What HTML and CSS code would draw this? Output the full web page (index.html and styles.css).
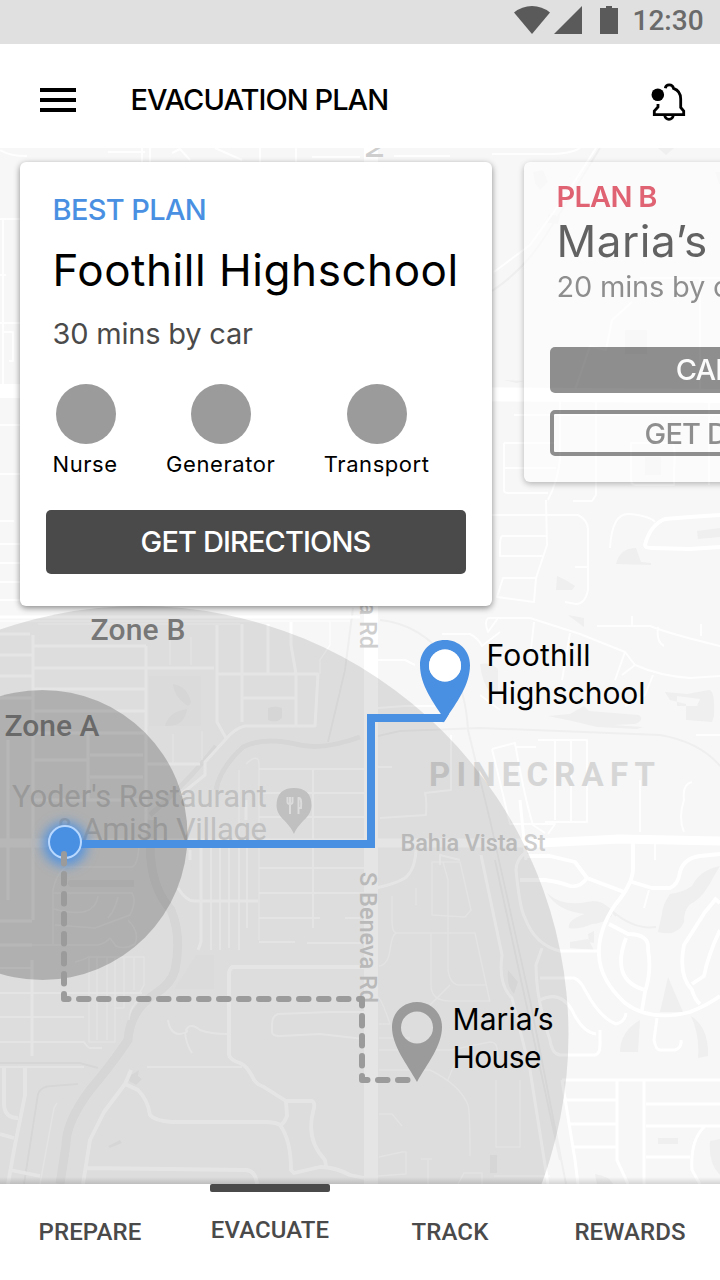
FILE: index.html
```html
<!DOCTYPE html>
<html lang="en">
<head>
<meta charset="utf-8">
<title>Evacuation Plan</title>
<link rel="stylesheet" href="styles.css">
</head>
<body>
<div class="app">
  <div class="status">
    <svg class="status-icons" width="106" height="44" viewBox="514 0 106 44">
      <path d="M514 12.5Q522 6 532 6T550 12.5L532 34Z"/>
      <path d="M554 34L582 6V34Z"/>
      <path d="M600 8h6V6h6v2h6v26h-18Z"/>
    </svg>
    <span class="clock">12:30</span>
  </div>
  <header class="header">
    <div class="menu"><i></i><i></i><i></i></div>
    <h1 class="title">EVACUATION PLAN</h1>
    <svg class="bell" width="36" height="40" viewBox="650 82 36 40">
      <circle cx="657.8" cy="94.8" r="6.3"/>
      <path class="bell-line" d="M665.3 88.300C666 83.600 672.500 84 673.500 88.300C678.500 90 680.700 94.500 680.700 99V107.500L683.700 111V114.600H654.300V111L658 107V104"/>
      <path class="bell-line" d="M664.500 115C666 120.800 672 120.800 673.500 115"/>
    </svg>
  </header>
  <main class="map">
    <svg class="map-canvas" width="720" height="1036" viewBox="0 148 720 1036">
      <defs>
        <filter id="glow" x="-100%" y="-100%" width="300%" height="300%"><feGaussianBlur stdDeviation="6"/></filter>
      </defs>
      <g class="block">
        <path d="M149 676h52v50h-52z"/><path d="M196 955h18v34h-40z"/>
      </g>
      <g class="water">
        <path d="M173 684q14 2 18 18q-2 6-6 2q-11-8-12-20zM165 726q3-14 22-17q-2 18-22 17zM268 708q8-3 14 0v10q-6 6-14 2z"/>
        <path d="M548 716l22-2 14-8 5 5 50 4q6 5-4 9l-22 1 30 2-6 2-40-2-25-6zM665 692l22 2 22-4q6 0 5 26l-2 6-26-2v-16l-16-4zm12 4v10h20l3-7z"/>
        <path d="M568 615l16 3v9zM616 564q4-16 20-16l5 14 10 1v2zM557 576q6 2 18 10l-3 4h-16zM697 531l23-3v9l-22 2z"/>
        <path d="M480 664q10-2 18 5v25l-8-2q-8-10-10-28zM547 893q15 14 40 9 20-4 25 14-10 8-20 8-14 6-23 4-2-8 16-14-28-3-38-21zM570 942l18-3 6 11-24-2zM588 934l6-3v12l-5-1z"/>
        <path d="M720 866q-20 4-28 20-8 6-22 8-8 12-8 20l-4 18q20 5 26-10 0-16 10-20 10-6 20-26zM660 1012l8-35 15 35zM620 1052q0-20 20-32l-2 32zM691 1016q18 12 17 40l-10 2q2-22-7-42zM658 1138h20v6h-20zM710 1141l10-2v36q-12-12-10-34zM595 1174q14 2 18 10h-16z"/>
        <path d="M508 970l10 12-4 12q-8-8-6-24zM490 1155h7v18h-7zM70 880h64v7H70q-5-4 0-7zM108 1146l12-6 2 3-12 5zM131 1075l8-5-1 6 4 3-6 6-7-4z"/>
        <path d="M658 148h16l-8 7zM533 172l10-2 5 12-8 8-5-7zM548 214l12 2-2 8-10-1zM625 330h22v24h-22zM645 457h16v18h-16zM715 172h5v14zM504 380l20 1-7 2z"/>
      </g>
      <g class="river">
        <path class="w10" d="M152 820Q144 880 171 910Q182 936 175 970Q171 984 155 994Q130 1010 128 1040Q112 1064 90 1090Q66 1122 66 1145L60 1184"/>
        <path class="w6" d="M360 737Q325 750 300 745Q265 736 243 747Q220 768 216 790M216 746Q190 780 150 815"/>
        <path class="w3" d="M612 911Q634 930 656 927M592 902q18 4 24 14M378 736L400 731L480 728L660 735Q700 742 720 766M353 608L345 670L328 742M380 620Q420 624 448 660Q466 690 468 730L490 820L530 1000L566 1184M495 860L560 1160M0 1063h80l18 5M24 1184l14-90q3-8 14-8l26-2M492 291q30-20 50-50T600 148"/>
      </g>
      <g class="road">
        <path class="w14" d="M371 148V1184M0 391L720 396"/>
        <path class="w8" d="M0 843H540L620 839L720 841"/>
        <path class="w4" d="M33 635V920M0 634H30M0 655H33M0 676H33M0 698H33M34 646H146M34 668H214M34 689H146M34 711H146M34 733H146M34 760H88M90 755H143M90 777H143M34 800H146M146 646V830M88 733V800M8 740V900M32 960V1056M0 921H32M0 945H32M0 617H360"/>
        <path class="w4" d="M217 625V722L226 738M217 674H318L315 726H245Q235 728 225 740L205 762V775L180 795M242 624V722M242 698H295M268 624V673M291 622V645L296 674V725M146 764H200M246 820V800"/>
        <path class="w2" d="M38 624H240M0 621H350M170 637V665M191 637V665M173 734V764M202 731V760M330 622V645L320 660V674M246 764Q259 752 259 765V940M239 770V840"/>
        <path class="w3" d="M259 769H364M259 793H364M259 817H364M259 868H364M259 893H364M259 918H320M313 769V928M259 942H295M307 943H364M345 918H360"/>
        <path class="w4" d="M201 848V942L198 950M178 888Q186 901 194 901H258M190 860V850"/>
        <path class="w3" d="M211 848V950M220 848V950M229 848V948M239 848V950M247 848V928"/>
        <path class="w2" d="M53 946V890Q56 874 66 867H132Q139 864 139 840M54 893H132Q137 900 130 915L95 928L55 925M54 909Q95 920 98 896M118 897Q115 910 108 918M128 920Q140 932 135 944Q125 950 116 946L110 938M0 945H97Q105 944 110 938M75 962Q84 960 88 957H144V985L140 992M89 957V1042H115V957M97 957V1040M107 957V1040M124 957V1008H115M134 957V990M129 1020Q130 1005 140 1000"/>
        <path class="w3" d="M0 968H32V1056M0 993H142M0 1017H84M0 1042H84Q88 1048 90 1048H102M0 1067H84M147 1067H242M168 1020Q170 1034 180 1034Q190 1032 186 1030Q190 1022 200 1030Q210 1034 228 1034M185 1032Q186 1044 192 1053M364 1012L330 1012L278 1014Q272 1016 272 1024V1032Q272 1036 280 1036L320 1034L364 1039"/>
        <path class="w5" d="M364 967H232Q229 970 229 974V1055Q230 1060 240 1063Q246 1065 252 1076Q255 1084 264 1087L286 1101H312Q316 1103 313 1112Q306 1140 325 1160L326 1166M286 1101L287 1116Q284 1124 280 1125Q291 1140 291 1170L294 1173L320 1167Q335 1167 350 1175L364 1178M280 1125Q275 1122 265 1122H172Q155 1121 150 1115Q148 1100 138 1090L125 1084M131 1070L125 1084L104 1112L90 1140L83 1184M87 1168L246 1170Q256 1171 257 1184M4 1068V1105Q5 1118 18 1118M25 1068V1095L14 1150L8 1184M0 1134L14 1138M10 1170L40 1176"/>
        <path class="w2" d="M57 1103L54 1108L40 1184M392 896V920Q392 932 396 933H475L490 1002M379 966Q388 965 390 950Q392 935 396 933M416 888V905M431 933V985Q431 1001 450 1001H490M443 862L448 880V970Q450 985 460 985H487M432 862H460L471 910L465 917L432 915ZM450 985L430 1005M379 1038H410M379 1050H450L490 1042Q496 1042 497 1048L500 1070M379 1070H430Q460 1085 468 1105Q470 1112 470 1156M496 1080V1147H520V1080M379 1114H392L402 1126M379 1157L402 1152H406V1174L378 1176M421 1159H432M428 1160V1184M458 1184L464 1173H482V1184M494 1176H550M379 1024H390Q382 1000 378 997M448 1080L456 1060"/>
        <path class="w4" d="M376 888Q395 884 405 878Q415 870 416 850M481 855L502 955Q498 985 512 998L530 1070L548 1184M520 800L526 860M554 840Q516 850 516 870Q520 910 525 918Q535 945 560 951H598M542 948L536 965Q536 1000 550 1040Q552 1054 560 1055H595Q600 1054 600 1045V1030M540 978H574Q580 980 585 990Q600 1018 616 1024Q625 1022 626 1013M540 1000Q560 990 572 1010Q582 1032 596 1034"/>
        <path class="w5" d="M520 880H545Q560 882 570 886Q580 888 587 878L575 862L550 856H525M587 878L624 892M633 840V870Q632 885 615 905Q598 930 599 955Q600 980 625 1003Q650 1022 690 1012Q708 1005 720 996M632 882L652 888H670Q678 885 680 872Q684 858 700 856L720 854M609 924L628 934Q650 934 648 950Q652 970 645 992L642 1010M626 938Q610 980 645 990M715 900Q710 906 705 912L684 945Q678 975 692 990Q695 1000 700 1004M714 898L720 903M692 984L704 976Q708 955 720 930"/>
        <path class="w4" d="M657 1018L654 1040Q656 1050 660 1050H675Q682 1048 681 1040M562 1080H720M563 1100H618M568 1124H616M574 1147H616M617 1080V1160L628 1184M644 1080V1184M646 1104H720M646 1126H720M646 1157H690M562 1080L575 1160L578 1184M705 1126Q690 1140 692 1170L700 1184"/>
        <path class="w3" d="M644 908L649 890M655 860V843M498 618L488 632Q484 622 488 618H530L580 634L625 652L635 665Q660 676 690 678L720 676M442 634H470Q478 638 482 646L500 632M597 626H650Q670 634 720 646M534 622L530 658M632 626V616M570 633L562 680M625 652L615 680M635 665L622 675M378 660H405L415 665M658 627Q656 642 664 646M701 636V624M440 648L460 650M480 695L500 710M653 675L645 695L625 706"/>
        <path class="w3" d="M492 749L515 743Q525 800 533 825L545 833M515 747H536M538 740H587V822H545M555 740V820M571 740V822M492 749L510 824H555L548 834M640 780V832M692 782Q682 784 684 800Q678 818 684 832M696 735H720M378 708L405 706H440M451 735V790L425 793Q427 800 426 815L380 818M378 767H392M440 865V855L460 860"/>
        <path class="w3" d="M492 515H578Q588 520 588 530V590Q585 604 576 604L565 602M575 567H587M547 536H502Q500 538 500 545V556H543M536 578H503L497 597L534 602L536 578L547 545L546 500M504 443V490Q504 493 508 493H548M504 443H555M504 468H556M560 400V460Q558 480 548 500M596 400V495L592 501H573M610 548Q612 512 630 514Q650 516 655 522M631 443H672Q676 446 674 470V485H635Q631 484 631 480Z"/>
        <path class="w5" d="M720 515L690 517L665 519Q650 525 645 545Q645 548 652 548L690 549L720 547"/>
        <path class="w3" d="M494 272L530 245L566 195L596 148M492 154H540Q570 155 580 148M632 302L612 320L606 350L590 346L575 390M514 415H720M709 400V485M640 278H720M700 278V390M0 150Q10 156 27 156M0 219H20M3 219V385M0 323H20M0 275H6M4 332H13V361H9M0 425H20M0 474H20M0 521H14M0 544H20M0 563H20M0 582H20M0 600H20M108 152H145M142 148V162M150 148V162M172 153L180 149L190 160M215 148L242 160M260 148V162M296 148V162M312 157H360M394 156H450"/>
      </g>
      <g class="place">
        <text x="267" y="807" text-anchor="end" class="poi" textLength="255">Yoder's Restaurant</text>
        <text x="267" y="840" text-anchor="end" class="poi" textLength="211">&amp; Amish Village</text>
        <text x="429" y="786" class="district" textLength="226">PINECRAFT</text>
        <text x="400.500" y="851" class="street" textLength="145">Bahia Vista St</text>
        <text transform="translate(360 872) rotate(90)" class="street" textLength="131">S Beneva Rd</text>
        <text transform="translate(360 518) rotate(90)" class="street" textLength="131">S Beneva Rd</text>
        <text transform="translate(366 142) rotate(90)" class="street">N</text>
        <path d="M276.500 805Q277 788 294 788T311.500 805C311.500 818 300 820 294 834C288 820 276.500 818 276.500 805Z"/>
        <path class="fork" d="M287.500 797V802Q287.500 804 290 804T292.500 802V797M290 797V814M298.500 814V798Q302 797 301 808H299"/>
      </g>
      <circle class="zone-b" cx="140" cy="1034.500" r="428.500"/>
      <circle class="zone-a" cx="42.500" cy="835" r="145"/>
      <text x="90.500" y="640" class="zone-label" textLength="95">Zone B</text>
      <text x="4.500" y="736" class="zone-label" textLength="95">Zone A</text>
      <circle class="halo" cx="65" cy="844" r="22" filter="url(#glow)"/>
      <path class="route" d="M65 844H371V718H444"/>
      <path class="pin-blue" fill-rule="evenodd" d="M420 665C420 650.500 431 640 445 640S470 650.500 470 665C470 685 457 702 445 720C433 702 420 685 420 665ZM461 665.500A16 16 0 1 0 429 665.500A16 16 0 1 0 461 665.500Z"/>
      <path class="pin-blue" d="M441 714H449L444.500 721.500Q443 723 441 721Z"/>
      <circle class="pin-hole" cx="445" cy="665.500" r="16"/>
      <circle class="here" cx="65" cy="842" r="16"/>
      <path class="alt-route" d="M64 854V999H362V1080H410"/>
      <path class="pin-gray" fill-rule="evenodd" d="M392 1027C392 1012.500 403 1002 417 1002S442 1012.500 442 1027C442 1046 427 1064 417 1082C407 1064 392 1046 392 1027ZM433 1027.500A16 16 0 1 0 401 1027.500A16 16 0 1 0 433 1027.500Z"/>
      <text x="486.500" y="666" class="pin-label" textLength="104">Foothill</text>
      <text x="486.500" y="704" class="pin-label" textLength="159">Highschool</text>
      <text x="452.500" y="1030" class="pin-label" textLength="101">Maria’s</text>
      <text x="452.500" y="1068" class="pin-label" textLength="89">House</text>
    </svg>
    <div class="cards">
      <section class="card card-best">
        <div class="tag">BEST PLAN</div>
        <h2 class="place-name">Foothill Highschool</h2>
        <p class="duration">30 mins by car</p>
        <div class="resources">
          <div class="resource"><i></i><span>Nurse</span></div>
          <div class="resource"><i></i><span>Generator</span></div>
          <div class="resource"><i></i><span>Transport</span></div>
        </div>
        <button class="button">GET DIRECTIONS</button>
      </section>
      <section class="card card-alt">
        <div class="tag">PLAN B</div>
        <h2 class="place-name">Maria’s House</h2>
        <p class="duration">20 mins by car</p>
        <button class="button">CALL MARIA</button>
        <button class="button button-outline">GET DIRECTIONS</button>
      </section>
    </div>
  </main>
  <nav class="nav">
    <a>PREPARE</a>
    <a class="active">EVACUATE</a>
    <a>TRACK</a>
    <a>REWARDS</a>
  </nav>
</div>
</body>
</html>
```
FILE: styles.css
```css
* { box-sizing: border-box; }
body { margin: 0; font-family: Inter, "Liberation Sans", sans-serif; color: #000; }
h1, h2, p { margin: 0; font-weight: 400; }
.app { width: 720px; height: 1280px; overflow: hidden; display: flex; flex-direction: column; background: #fff; }

.status { height: 44px; flex: none; background: #e0e0e0; display: flex; justify-content: flex-end; align-items: center; padding-right: 16px; }
.status-icons { fill: #5a5a5a; margin-right: 12.500px; }
.clock { font: 500 28px/40px Roboto, sans-serif; color: #6a6a6a; width: 71.500px; white-space: nowrap; margin-top: -3px; }

.header { height: 104px; flex: none; display: flex; align-items: center; padding: 8px 34px 0 40px; }
.menu { width: 36px; display: grid; gap: 6px; }
.menu i { height: 4px; background: #000; }
.title { margin: 0 0 0 54.500px; flex: 1; font-size: 29px; line-height: 36px; font-weight: 500; letter-spacing: -0.950px; white-space: nowrap; }
.bell { margin-top: 4px; }
.bell-line { fill: none; stroke: #000; stroke-width: 2.800; }

.map { height: 1036px; flex: none; position: relative; overflow: hidden; background: #f7f7f7; }
.map-canvas { position: absolute; inset: 0; }
.map::after { content: ""; position: absolute; left: 0; right: 0; bottom: 0; height: 7px; background: linear-gradient(transparent, rgba(0, 0, 0, 0.140)); }
.block { fill: #f4f4f4; }
.water { fill: #efefef; }
.river path { fill: none; stroke: #efefef; }
.road path { fill: none; stroke: #fff; stroke-linejoin: round; }
.map-canvas .w2 { stroke-width: 1.500; stroke-opacity: 0.700; }
.map-canvas .w3 { stroke-width: 2; stroke-opacity: 0.850; }
.map-canvas .river .w3 { stroke-opacity: 1; }
.map-canvas .w4 { stroke-width: 3; }
.map-canvas .w5 { stroke-width: 3.800; }
.map-canvas .w6 { stroke-width: 5; }
.map-canvas .w8 { stroke-width: 9; }
.map-canvas .w10 { stroke-width: 9; }
.map-canvas .w14 { stroke-width: 14; }
.place { fill: #d6d6d6; font-family: Roboto, sans-serif; }
.poi { font-size: 31px; }
.district { font-size: 33px; font-weight: 700; }
.street { font-size: 23.500px; font-weight: 500; fill: #cecece; }
.fork { fill: none; stroke: #f4f4f4; stroke-width: 2; }
.zone-b { fill: rgba(0, 0, 0, 0.100); }
.zone-a { fill: rgba(0, 0, 0, 0.200); }
.zone-label { font: 500 30px Roboto, sans-serif; fill: #4a4a4a; fill-opacity: 0.700; }
.halo { fill: #4a90e2; fill-opacity: 0.900; }
.route { fill: none; stroke: #4a90e2; stroke-width: 8; }
.pin-blue { fill: #4a90e2; }
.pin-hole { fill: #fff; }
.pin-gray { fill: #9b9b9b; }
.here { fill: #4a90e2; stroke: #b8d8ff; stroke-width: 2; }
.alt-route { fill: none; stroke: #9b9b9b; stroke-width: 6; stroke-linecap: round; stroke-linejoin: round; stroke-dasharray: 9.500 10.500; }
.pin-label { font-size: 30px; fill: #000; }

.cards { position: relative; display: flex; align-items: flex-start; gap: 32px; padding: 14px 20px; width: max-content; }
.card { width: 472px; background: #fff; border-radius: 6px; padding: 0 26px; box-shadow: 0 2px 6px rgba(0, 0, 0, 0.450); display: flex; flex-direction: column; white-space: nowrap; }
.tag, .duration { margin-left: 6.500px; }
.tag { font-size: 29px; line-height: 36px; font-weight: 500; letter-spacing: -0.650px; }
.place-name { font-size: 44px; line-height: 52px; letter-spacing: 0.540px; margin-left: 6.500px; }
.duration { font-size: 29px; line-height: 36px; letter-spacing: -0.200px; color: #4a4a4a; }
.card-best { height: 444px; padding-top: 30px; }
.card-best .tag { color: #4a90e2; }
.card-best .place-name { margin-top: 16px; }
.card-best .duration { margin-top: 20px; }
.resources { display: flex; gap: 48.500px; margin: 32px 0 0 6.500px; height: 126px; }
.resource { display: flex; flex-direction: column; align-items: center; font-size: 22px; line-height: 28px; letter-spacing: 0.560px; }
.resource i { width: 60px; height: 60px; border-radius: 50%; background: #9b9b9b; margin: 0 0 6px 1px; }
.button { height: 64px; border: 0; border-radius: 5px; background: #4a4a4a; color: #fff; font: 500 29px/36px Inter, sans-serif; letter-spacing: -0.870px; padding: 0 1px 1px 0; }
.card-alt { height: 320px; opacity: 0.600; padding-top: 17px; }
.card-alt .tag { color: #d0021b; font-weight: 600; letter-spacing: -0.750px; }
.card-alt .place-name { margin-top: 0; }
.card-alt .duration { margin-top: 2px; }
.card-alt .button { height: 46px; margin-top: 42px; }
.card-alt .button-outline { margin-top: 17px; background: none; color: #4a4a4a; border: 4px solid #4a4a4a; padding: 1px 1px 0 0; }

.nav { height: 96px; flex: none; display: grid; grid-template-columns: repeat(4, 180px); font: 500 24px/28px Roboto, sans-serif; letter-spacing: 0.100px; color: #4a4a4a; text-align: center; background: #fff; }
.nav a { padding-top: 34px; }
.nav .active { padding-top: 0; margin: 0 30px; }
.nav .active::before { content: ""; display: block; height: 8px; border-radius: 2px; background: #4a4a4a; margin-bottom: 24px; }
```
